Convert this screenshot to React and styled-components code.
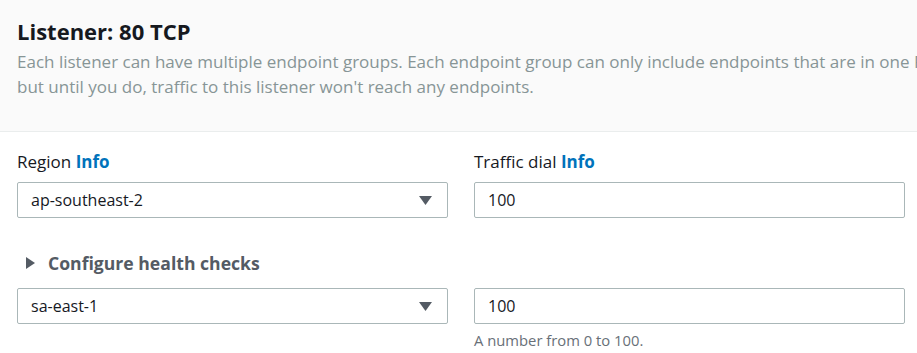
import React from 'react'
import styled, { createGlobalStyle } from 'styled-components'

const GlobalStyle = createGlobalStyle`
    html, body {
        margin: 0;
        padding: 0;
        background: #ffffff;
        overflow: hidden;
    }
    body {
        font-family: "Open Sans", "Noto Sans", Arial, sans-serif;
        color: #16191f;
    }
`

const Page = styled.div`
    width: 917px;
    overflow: hidden;
`

const Header = styled.div`
    background: #fafafa;
    border-bottom: 1px solid #eaeded;
    padding: 16px 17px 0;
    height: 132px;
    box-sizing: border-box;
`

const Title = styled.h2`
    margin: 0;
    font-size: 22px;
    line-height: 30px;
    font-weight: 700;
    color: #16191f;
`

const Description = styled.p`
    margin: 3px 0 0;
    font-size: 17px;
    line-height: 25px;
    color: #879596;
    white-space: nowrap;
`

const Body = styled.div`
    padding: 19px 17px 0;
`

const Grid = styled.div`
    display: grid;
    grid-template-columns: 431px 431px;
    column-gap: 26px;
    align-items: start;
`

const Field = styled.div`
    display: flex;
    flex-direction: column;
`

const Label = styled.label`
    font-size: 17px;
    line-height: 22px;
    color: #16191f;
    margin-bottom: 9px;
`

const InfoLink = styled.a`
    color: #0073bb;
    font-weight: 700;
    text-decoration: none;
`

const Box = styled.div`
    display: flex;
    align-items: center;
    justify-content: space-between;
    height: 36px;
    box-sizing: border-box;
    border: 1px solid #aab7b8;
    border-radius: 2px;
    padding: 0 15px 0 13px;
    font-size: 16px;
    color: #16191f;
    background: #ffffff;
`

const Hint = styled.div`
    font-size: 14.8px;
    line-height: 18px;
    color: #687078;
    margin-top: 7px;
`

const Expander = styled.div`
    grid-column: 1 / -1;
    display: flex;
    align-items: center;
    gap: 13px;
    padding-left: 9px;
    margin: 32px 0 12px;
    font-size: 17.6px;
    font-weight: 700;
    line-height: 26px;
    color: #545b64;
`

const Caret = ({ dir }) =>
    dir === 'right' ? (
        <svg width="9" height="12" viewBox="0 0 9 12">
            <path d="M0 0 L9 6 L0 12 Z" fill="#545b64" />
        </svg>
    ) : (
        <svg width="13" height="9" viewBox="0 0 13 9">
            <path d="M0 0 L13 0 L6.5 9 Z" fill="#545b64" />
        </svg>
    )

const Select = ({ value }) => (
    <Box>
        <span>{value}</span>
        <Caret dir="down" />
    </Box>
)

export default function App() {
    return (
        <Page>
            <GlobalStyle />
            <Header>
                <Title>Listener: 80 TCP</Title>
                <Description>
                    Each listener can have multiple endpoint groups. Each endpoint group can only include endpoints that are in one Region. You can add endpoint groups later,
                    <br />
                    but until you do, traffic to this listener won't reach any endpoints.
                </Description>
            </Header>
            <Body>
                <Grid>
                    <Field>
                        <Label>Region <InfoLink href="#">Info</InfoLink></Label>
                        <Select value="ap-southeast-2" />
                    </Field>
                    <Field>
                        <Label>Traffic dial <InfoLink href="#">Info</InfoLink></Label>
                        <Box>100</Box>
                    </Field>
                    <Expander>
                        <Caret dir="right" />
                        Configure health checks
                    </Expander>
                    <Field>
                        <Select value="sa-east-1" />
                    </Field>
                    <Field>
                        <Box>100</Box>
                        <Hint>A number from 0 to 100.</Hint>
                    </Field>
                </Grid>
            </Body>
        </Page>
    )
}
